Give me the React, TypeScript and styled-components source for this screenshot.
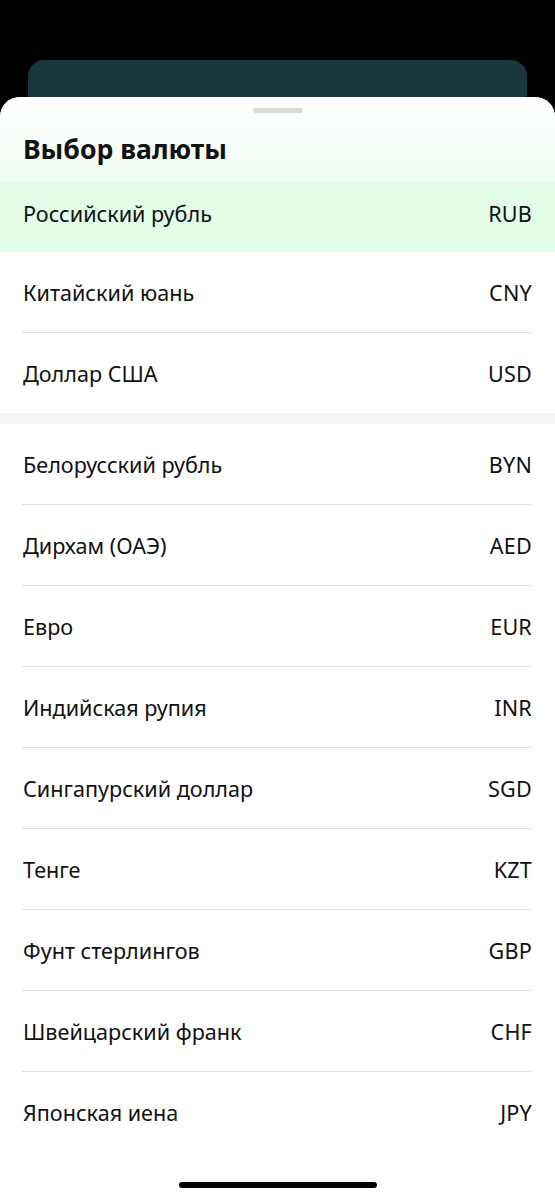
import React from 'react'
import styled, { createGlobalStyle } from 'styled-components'

const GlobalStyle = createGlobalStyle`
  body {
    margin: 0;
    background: #000;
    font-family: "Noto Sans", "Open Sans", sans-serif;
  }
`

const Screen = styled.div`
  min-height: 1200px;
  background: #000;
  padding-top: 60px;
  box-sizing: border-box;
`

const BackCard = styled.div`
  margin: 0 28px;
  height: 37px;
  background: #17373a;
  border-radius: 16px 16px 0 0;
`

const Sheet = styled.div`
  background: #fff;
  border-radius: 20px 20px 0 0;
  height: 1103px;
  overflow: hidden;
  display: flex;
  flex-direction: column;
`

const Header = styled.div`
  height: 85px;
  box-sizing: border-box;
  background: linear-gradient(180deg, #ffffff 0%, #f1fdf4 100%);
  display: flex;
  flex-direction: column;
`

const Handle = styled.div`
  width: 50px;
  height: 5px;
  border-radius: 3px;
  background: #d9d9d9;
  margin: 11px auto 0;
`

const Title = styled.h1`
  margin: 0;
  padding: 19px 23px 0;
  font-size: 26.6px;
  font-weight: 700;
  color: #111;
  line-height: 34px;
`

const List = styled.div`
  display: flex;
  flex-direction: column;
`

const Row = styled.div<{ $selected?: boolean; $short?: boolean }>`
  height: ${p => (p.$short ? 70 : 80)}px;
  padding: 0 23px ${p => (p.$short ? 8 : 0)}px;
  box-sizing: border-box;
  display: flex;
  align-items: center;
  justify-content: space-between;
  background: ${p => (p.$selected ? '#e2fde8' : '#fff')};
  font-size: 21.6px;
  color: #111;
`

const Name = styled.span``

const Code = styled.span`
  letter-spacing: 0.2px;
`

const Divider = styled.div`
  height: 1px;
  margin: 0 23px 0 22px;
  background: #e2e2e2;
`

const Band = styled.div`
  height: 11px;
  background: #f4f4f4;
`

const HomeIndicator = styled.div`
  width: 198px;
  height: 6px;
  border-radius: 3px;
  background: #000;
  margin: 30px auto 0;
`

type Currency = { name: string; code: string }

const popular: Currency[] = [
  { name: 'Китайский юань', code: 'CNY' },
  { name: 'Доллар США', code: 'USD' },
]

const others: Currency[] = [
  { name: 'Белорусский рубль', code: 'BYN' },
  { name: 'Дирхам (ОАЭ)', code: 'AED' },
  { name: 'Евро', code: 'EUR' },
  { name: 'Индийская рупия', code: 'INR' },
  { name: 'Сингапурский доллар', code: 'SGD' },
  { name: 'Тенге', code: 'KZT' },
  { name: 'Фунт стерлингов', code: 'GBP' },
  { name: 'Швейцарский франк', code: 'CHF' },
  { name: 'Японская иена', code: 'JPY' },
]

function renderGroup(items: Currency[]) {
  return items.map((c, i) => (
    <React.Fragment key={c.code}>
      {i > 0 && <Divider />}
      <Row>
        <Name>{c.name}</Name>
        <Code>{c.code}</Code>
      </Row>
    </React.Fragment>
  ))
}

export default function App() {
  return (
    <Screen>
      <GlobalStyle />
      <BackCard />
      <Sheet>
        <Header>
          <Handle />
          <Title>Выбор валюты</Title>
        </Header>
        <List>
          <Row $selected $short>
            <Name>Российский рубль</Name>
            <Code>RUB</Code>
          </Row>
          {renderGroup(popular)}
        </List>
        <Band />
        <List>{renderGroup(others)}</List>
        <HomeIndicator />
      </Sheet>
    </Screen>
  )
}
